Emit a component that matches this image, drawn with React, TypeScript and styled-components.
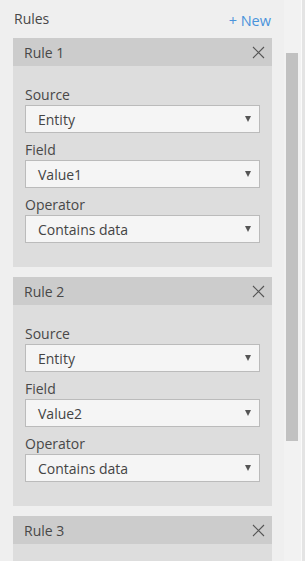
import React from 'react';
import styled, { createGlobalStyle } from 'styled-components';

// styles
const GlobalStyle = createGlobalStyle`
  html, body {
    margin: 0;
    padding: 0;
    height: 100%;
    overflow: hidden;
    background-color: #efefef;
  }
  #root {
    height: 100%;
  }
`;

const Pane = styled.div`
  display: flex;
  height: 561px;
  font-family: 'Open Sans', 'Noto Sans', sans-serif;
  color: #444;
`;

const Content = styled.main`
  width: 284px;
  flex: none;
  padding: 0 12px 0 13px;
  box-sizing: border-box;
  overflow: hidden;
`;

const TopBar = styled.header`
  height: 38px;
  display: flex;
  justify-content: space-between;
  align-items: flex-start;
`;

const Title = styled.h2`
  margin: 0;
  padding: 9px 0 0 1px;
  font-size: 14px;
  font-weight: 400;
  line-height: 19px;
  color: #484848;
`;

const NewButton = styled.button`
  margin: 0;
  padding: 11px 1px 0 0;
  border: none;
  background: transparent;
  font-family: inherit;
  font-size: 14.5px;
  line-height: 19px;
  color: #4a93db;
  cursor: pointer;
`;

const Card = styled.section`
  margin-bottom: 10px;
  background-color: #dddddd;
`;

const CardHeader = styled.div`
  height: 28px;
  display: flex;
  align-items: center;
  justify-content: space-between;
  padding: 0 7px 0 11px;
  background-color: #cccccc;
  font-size: 14px;
  color: #484848;
`;

const CloseButton = styled.button`
  width: 14px;
  height: 14px;
  padding: 0;
  border: none;
  background: transparent;
  display: flex;
  align-items: center;
  justify-content: center;
  color: #555;
`;

const CardBody = styled.div`
  min-height: 20px;
  padding: 12px 12px 24px 12px;
`;

const Label = styled.label`
  display: block;
  padding-top: 7px;
  font-size: 14px;
  line-height: 20px;
  color: #484848;
`;

const Select = styled.div`
  height: 28px;
  box-sizing: border-box;
  display: flex;
  align-items: center;
  justify-content: space-between;
  padding: 0 8px 0 12px;
  border: 1px solid #bbbbbb;
  background-color: #f5f5f5;
  font-size: 14px;
  color: #444;
`;

const Arrow = styled.span`
  width: 0;
  height: 0;
  border-left: 3.5px solid transparent;
  border-right: 3.5px solid transparent;
  border-top: 6px solid #555;
`;

const Scrollbar = styled.div`
  width: 18px;
  flex: none;
  padding: 53px 3px 0 2px;
  box-sizing: border-box;
  background-color: #f2f2f2;
  border-right: 1px solid #fafafa;
`;

const Thumb = styled.div`
  height: 388px;
  background-color: #c1c1c1;
`;

const Edge = styled.div`
  flex: 1;
  background-color: #e4e4e4;
`;

// data
type Rule = {
  name: string;
  fields?: { label: string; value: string }[];
};

const rules: Rule[] = [
  {
    name: 'Rule 1',
    fields: [
      { label: 'Source', value: 'Entity' },
      { label: 'Field', value: 'Value1' },
      { label: 'Operator', value: 'Contains data' },
    ],
  },
  {
    name: 'Rule 2',
    fields: [
      { label: 'Source', value: 'Entity' },
      { label: 'Field', value: 'Value2' },
      { label: 'Operator', value: 'Contains data' },
    ],
  },
  // the rest of rule 3 is below the fold
  { name: 'Rule 3' },
];

const CloseIcon = () => (
  <svg width="13" height="13" viewBox="0 0 13 13">
    <path d="M1 1 L12 12 M12 1 L1 12" stroke="currentColor" strokeWidth="1.1" fill="none" />
  </svg>
);

const Dropdown = ({ value }: { value: string }) => (
  <Select>
    <span>{value}</span>
    <Arrow />
  </Select>
);

// logic
const App = () => {
  return (
    <>
      <GlobalStyle />
      <Pane>
        <Content>
          <TopBar>
            <Title>Rules</Title>
            <NewButton>+ New</NewButton>
          </TopBar>
          {rules.map((rule) => (
            <Card key={rule.name}>
              <CardHeader>
                <span>{rule.name}</span>
                <CloseButton>
                  <CloseIcon />
                </CloseButton>
              </CardHeader>
              <CardBody>
                {rule.fields?.map((f) => (
                  <React.Fragment key={f.label}>
                    <Label>{f.label}</Label>
                    <Dropdown value={f.value} />
                  </React.Fragment>
                ))}
              </CardBody>
            </Card>
          ))}
        </Content>
        <Scrollbar>
          <Thumb />
        </Scrollbar>
        <Edge />
      </Pane>
    </>
  );
};

export default App;
